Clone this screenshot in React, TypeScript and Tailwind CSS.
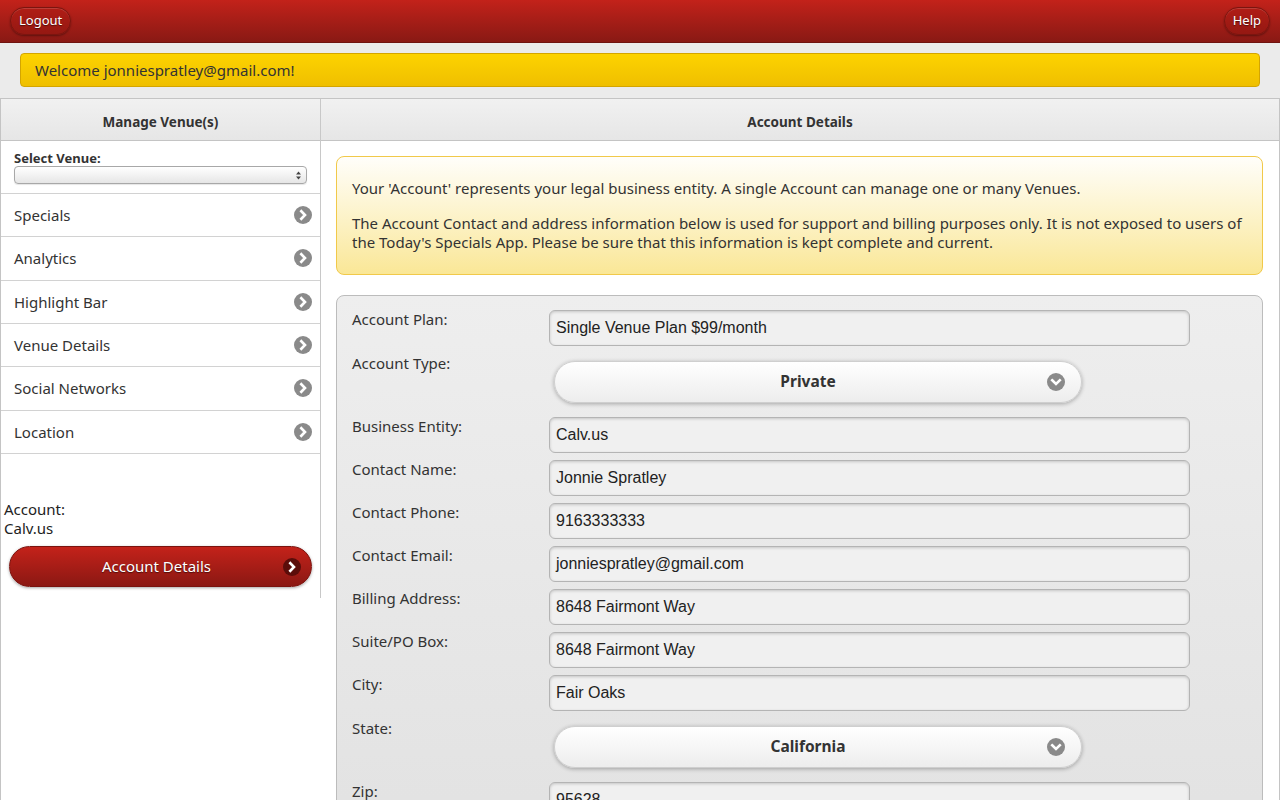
import React from 'react';

const ui = "font-['Noto_Sans','Open_Sans',sans-serif]";
const arial = "font-['Liberation_Sans',Arial,sans-serif]";

const CircleArrow = ({ dir = 'right', fill = '#8a8a8a' }: { dir?: 'right' | 'down'; fill?: string }) => (
  <svg width="18" height="18" viewBox="0 0 18 18">
    <circle cx="9" cy="9" r="9" fill={fill} />
    {dir === 'right' ? (
      <polyline points="7.3,5.2 11,9 7.3,12.8" fill="none" stroke="#fff" strokeWidth="2.6" strokeLinecap="square" />
    ) : (
      <polyline points="5.2,7.3 9,11 12.8,7.3" fill="none" stroke="#fff" strokeWidth="2.6" strokeLinecap="square" />
    )}
  </svg>
);

const navItems = ['Specials', 'Analytics', 'Highlight Bar', 'Venue Details', 'Social Networks', 'Location'];

const InputRow = ({ label, value }: { label: string; value: string }) => (
  <div className="flex items-start mb-[7px]">
    <label className="w-[197px] leading-[18px] text-[15px] text-[#333]">{label}</label>
    <div
      className={`w-[641px] h-[36px] rounded-[6px] border border-[#b4b4b4] bg-[#f0f0f0] shadow-[inset_0_1px_3px_rgba(0,0,0,0.18)] px-[6px] flex items-center text-[16px] text-[#222] ${arial}`}
    >
      {value}
    </div>
  </div>
);

const SelectRow = ({ label, value }: { label: string; value: string }) => (
  <div className="flex items-start mb-[7px]">
    <label className="w-[197px] leading-[18px] pt-[1px] text-[15px] text-[#333]">{label}</label>
    <div className="ml-[5px] mt-[8px] mb-[7px] w-[528px] h-[42px] rounded-full border border-[#cfcfcf] bg-gradient-to-b from-[#ffffff] to-[#ededed] shadow-[0_1px_4px_rgba(0,0,0,0.3)] relative flex items-center justify-center pr-[20px]">
      <span className="font-bold text-[15.5px] text-[#333]">{value}</span>
      <span className="absolute right-[16px] top-[11px]">
        <CircleArrow dir="down" />
      </span>
    </div>
  </div>
);

const headerBtn =
  'h-[28px] px-[8px] rounded-full bg-gradient-to-b from-[#b01d16] to-[#951812] border border-[#7b150f] shadow-[0_1px_2px_rgba(0,0,0,0.35),inset_0_1px_0_rgba(255,255,255,0.15)] text-white text-[13px] [text-shadow:0_1px_1px_rgba(0,0,0,0.5)]';

export default function App() {
  return (
    <div className={`min-h-screen bg-[#ebebeb] text-[#333] ${ui}`}>
      <header className="h-[43px] flex items-center justify-between px-[10px] bg-gradient-to-b from-[#c3221a] to-[#891914] border-b border-[#6f1410]">
        <button className={headerBtn}>Logout</button>
        <button className={headerBtn}>Help</button>
      </header>

      <div className="px-[20px] pt-[10px] pb-[11px]">
        <div className="h-[34px] rounded-[4px] border border-[#d4a500] bg-gradient-to-b from-[#fdd300] to-[#efbf00] flex items-center px-[14px] text-[15px] text-[#333]">
          Welcome jonniespratley@gmail.com!
        </div>
      </div>

      <div className="flex items-start border-t border-l border-[#c4c4c4] bg-white">
        {/* left column */}
        <div className="w-[320px] shrink-0 border-r border-[#c8c8c8] bg-white">
          <div className="h-[42px] pt-[5px] border-b border-[#c4c4c4] bg-gradient-to-b from-[#f1f1f1] to-[#e6e6e6] flex items-center justify-center text-[13.5px] font-bold text-[#333]">
            Manage Venue(s)
          </div>
          <div className="px-[13px] pt-[9px] pb-[9px] border-b border-[#d2d2d2]">
            <div className="text-[13px] font-bold leading-[16px] text-[#333]">Select Venue:</div>
            <div className="h-[18px] rounded-[4px] border border-[#a8a8a8] bg-gradient-to-b from-[#ffffff] to-[#e6e6e6] shadow-[0_1px_1px_rgba(0,0,0,0.1)] flex items-center justify-end pr-[5px]">
              <svg width="5" height="9" viewBox="0 0 5 9">
                <polygon points="2.5,0.5 5,3.5 0,3.5" fill="#444" />
                <polygon points="0,5.5 5,5.5 2.5,8.5" fill="#444" />
              </svg>
            </div>
          </div>
          {navItems.map((item) => (
            <div key={item} className="h-[43.33px] px-[13px] border-b border-[#d2d2d2] flex items-center justify-between">
              <span className="text-[15px] text-[#333]">{item}</span>
              <span className="mr-[-5px]">
                <CircleArrow />
              </span>
            </div>
          ))}
          <div className="pt-[46px] pl-[3px] text-[15px] leading-[19px] text-[#222]">
            <div>Account:</div>
            <div>Calv.us</div>
          </div>
          <div className="px-[8px] pt-[8px] pb-[11px]">
            <div className="h-[41px] pr-[8px] rounded-full border border-[#7a130f] bg-gradient-to-b from-[#c4221a] to-[#8b1813] shadow-[0_1px_3px_rgba(0,0,0,0.35)] relative flex items-center justify-center text-white text-[15px] [text-shadow:0_1px_1px_rgba(0,0,0,0.5)]">
              Account Details
              <span className="absolute right-[10px] top-[11px]">
                <CircleArrow fill="#5b0d0a" />
              </span>
            </div>
          </div>
        </div>

        {/* right column */}
        <div className="flex-1 border-r border-[#c4c4c4] bg-white">
          <div className="h-[42px] pt-[5px] border-b border-[#c4c4c4] bg-gradient-to-b from-[#f1f1f1] to-[#e6e6e6] flex items-center justify-center text-[13.5px] font-bold text-[#333]">
            Account Details
          </div>
          <div className="pl-[15px] pr-[16px] pt-[15px]">
            <div className="rounded-[8px] border border-[#f1c94a] bg-gradient-to-b from-[#fffefa] to-[#fae796] px-[15px] pt-[22px] pb-[22px] text-[15px] leading-[19px] text-[#333]">
              <p>Your 'Account' represents your legal business entity. A single Account can manage one or many Venues.</p>
              <p className="mt-[16px]">
                The Account Contact and address information below is used for support and billing purposes only. It is not exposed to users of the Today's Specials App. Please be sure that this information is kept complete and current.
              </p>
            </div>

            <div className="mt-[20px] rounded-[8px] border border-[#bcbcbc] bg-gradient-to-b from-[#eeeeee] to-[#e2e2e2] pl-[15px] pt-[14px] pb-[20px]">
              <InputRow label="Account Plan:" value="Single Venue Plan $99/month" />
              <SelectRow label="Account Type:" value="Private" />
              <InputRow label="Business Entity:" value="Calv.us" />
              <InputRow label="Contact Name:" value="Jonnie Spratley" />
              <InputRow label="Contact Phone:" value="9163333333" />
              <InputRow label="Contact Email:" value="jonniespratley@gmail.com" />
              <InputRow label="Billing Address:" value="8648 Fairmont Way" />
              <InputRow label="Suite/PO Box:" value="8648 Fairmont Way" />
              <InputRow label="City:" value="Fair Oaks" />
              <SelectRow label="State:" value="California" />
              <InputRow label="Zip:" value="95628" />
            </div>
          </div>
        </div>
      </div>
    </div>
  );
}
